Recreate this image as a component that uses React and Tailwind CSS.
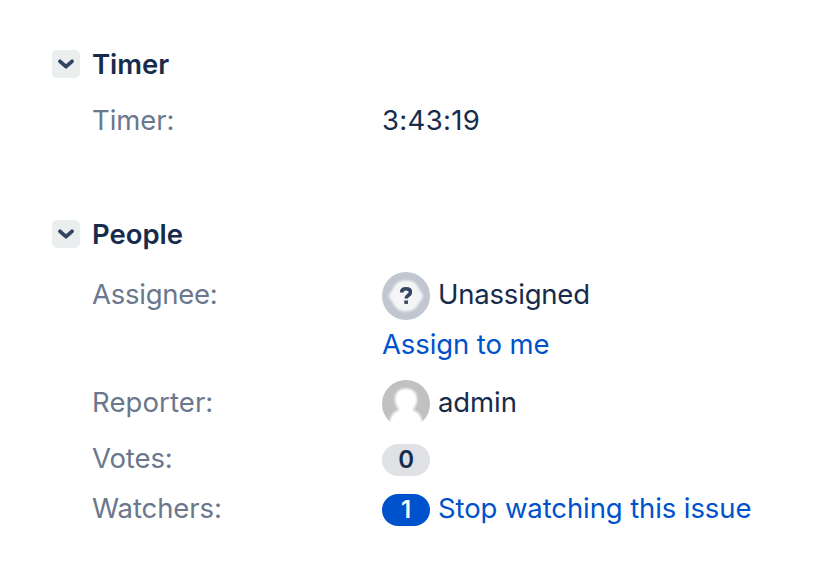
function Heading({ children }) {
  return (
    <div className="flex h-7 items-center gap-3">
      <span className="size-7 shrink-0 rounded-[5px] bg-[#ebeeef]">
        <svg viewBox="0 0 28 28" fill="none" stroke="#344563" strokeWidth="3.8" strokeLinecap="round" strokeLinejoin="round">
          <path d="M8 11.3l6 5.4 6-5.4" />
        </svg>
      </span>
      <h2 className="font-semibold tracking-[-0.04px]">{children}</h2>
    </div>
  );
}

function Label({ children, className = "" }) {
  return <dt className={`w-[290px] shrink-0 text-[#6b778c] ${className}`}>{children}</dt>;
}

function UnassignedAvatar() {
  return (
    <svg className="size-12 shrink-0" viewBox="0 0 48 48">
      <defs>
        <filter id="softFace"><feGaussianBlur stdDeviation="0.9" /></filter>
        <filter id="softMark"><feGaussianBlur stdDeviation="0.65" /></filter>
      </defs>
      <circle cx="24" cy="24" r="24" fill="#c1c7d0" />
      <path d="M24 8.500c7 0 11 2.500 13 8.500l3.500 5c.7 1 .7 3 0 4l-3.500 5c-2.500 5-6.500 8.500-13 8.500S13.500 36 11 31l-3.500-5c-.7-1-.7-3 0-4l3.500-5c2-6 6-8.500 13-8.500z" fill="#f4f5f7" filter="url(#softFace)" />
      <g filter="url(#softMark)">
        <path d="M19.500 20.500c.2-2.500 1.900-3.800 4.500-3.800 2.700 0 4.500 1.300 4.500 3.500 0 3-4.300 3.100-4.300 6.200" fill="none" stroke="#344563" strokeWidth="3.600" />
        <rect x="22.300" y="28.500" width="3.700" height="3.400" fill="#344563" />
      </g>
    </svg>
  );
}

function UserAvatar() {
  return (
    <svg className="size-12 shrink-0" viewBox="0 0 48 48">
      <defs>
        <filter id="softUser" x="-20%" y="-20%" width="140%" height="140%"><feGaussianBlur stdDeviation="0.9" /></filter>
      </defs>
      <circle cx="24" cy="24" r="24" fill="#c1c1c1" />
      <g fill="#fff" filter="url(#softUser)">
        <path d="M24 8.500c6.500 0 11 4 11 10.500 0 5-2 8-4 10.500v3H17v-3c-2-2.500-4-5.500-4-10.500C13 12.500 17.500 8.500 24 8.500z" />
        <path d="M3 56L7.500 42C9 35 12 31 18 30h12c6 1 9 5 10.500 12L45 56z" />
      </g>
    </svg>
  );
}

function Badge({ children, className }) {
  return (
    <span className={`mt-1 flex h-8 w-12 shrink-0 items-center justify-center rounded-full text-[24px] leading-8 font-semibold ${className}`}>
      {children}
    </span>
  );
}

export default function App() {
  return (
    <main className="h-[578px] w-[836px] bg-white pt-[50px] pl-[52px] font-['Inter',sans-serif] text-[27.5px] leading-9 tracking-[-0.1px] whitespace-nowrap text-[#172b4d]">
      <section className="h-[170px]">
        <Heading>Timer</Heading>
        <dl className="mt-6 ml-10 flex">
          <Label>Timer:</Label>
          <dd className="tracking-[0.35px]">3:43:19</dd>
        </dl>
      </section>
      <section>
        <Heading>People</Heading>
        <dl className="mt-6 ml-10">
          <div className="flex h-[108px] pt-1">
            <Label className="tracking-[-0.25px]">Assignee:</Label>
            <dd>
              <div className="flex gap-2"><span className="-mt-1 h-12"><UnassignedAvatar /></span><span className="tracking-[-0.2px]">Unassigned</span></div>
              <a className="mt-1.5 block text-[#0052cc]">Assign to me</a>
            </dd>
          </div>
          <div className="flex h-[60px] pt-1">
            <Label className="tracking-[0.1px]">Reporter:</Label>
            <dd className="flex gap-2"><span className="-mt-1 h-12"><UserAvatar /></span><span>admin</span></dd>
          </div>
          <div className="flex h-[50px]">
            <Label>Votes:</Label>
            <dd><Badge className="bg-[#dfe1e5]">0</Badge></dd>
          </div>
          <div className="flex">
            <Label>Watchers:</Label>
            <dd className="flex gap-2"><Badge className="bg-[#0052cc] text-white">1</Badge><a className="text-[#0052cc]">Stop watching this issue</a></dd>
          </div>
        </dl>
      </section>
    </main>
  );
}
